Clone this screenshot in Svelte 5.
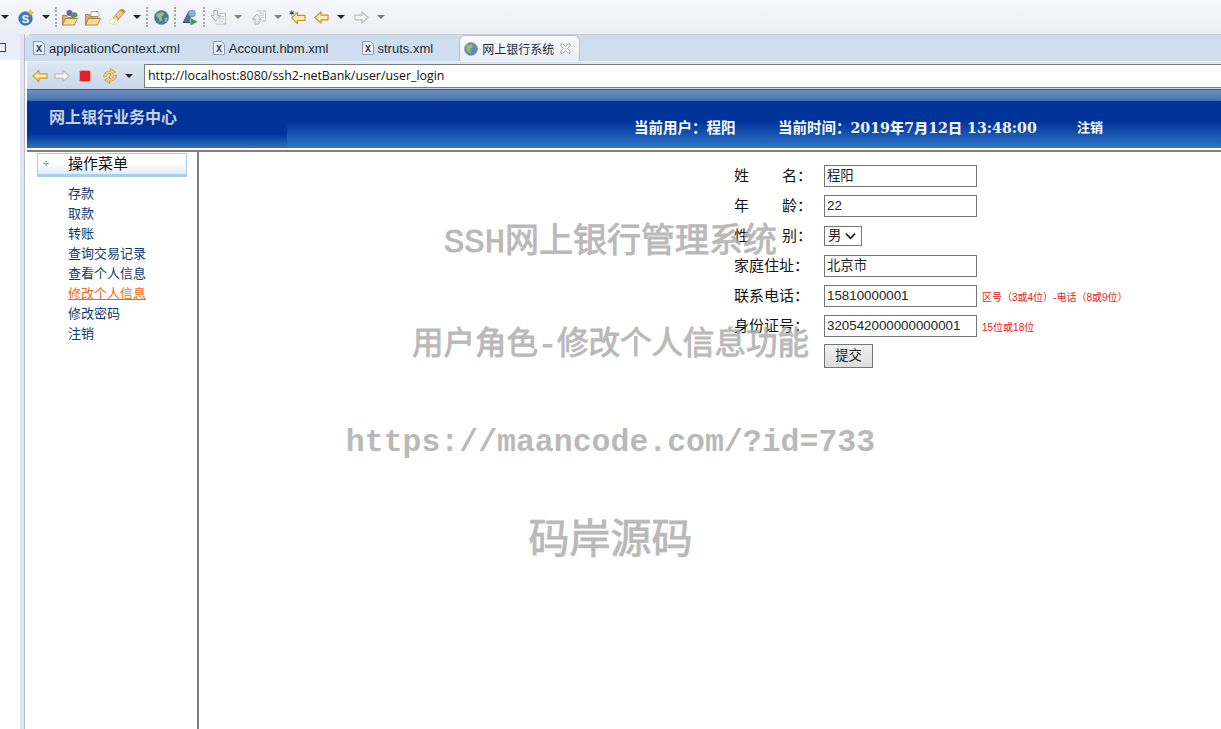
<script lang="ts">
  const menu = ['存款', '取款', '转账', '查询交易记录', '查看个人信息', '修改个人信息', '修改密码', '注销'];
  const activeItem = '修改个人信息';
  const tabs = ['applicationContext.xml', 'Account.hbm.xml', 'struts.xml'];
  const fields = [
    { label: ['姓', '名'], value: '程阳' },
    { label: ['年', '龄'], value: '22' },
    { label: ['性', '别'], select: '男' },
    { label: ['家庭住址'], value: '北京市' },
    { label: ['联系电话'], value: '15810000001', hint: '区号（3或4位）-电话（8或9位）' },
    { label: ['身份证号'], value: '320542000000000001', hint: '15位或18位' }
  ];
</script>

<div class="screen">
  <header class="toolbar">
    <span class="caret"></span>
    <svg class="ico w16 ml9" viewBox="0 0 16 16"><circle cx="7.500" cy="9" r="6.800" fill="#3d7fb6" stroke="#2c5f8e" stroke-width=".6"/><text x="7.500" y="13" font-size="11" font-weight="700" text-anchor="middle" fill="#fff" font-family="Liberation Sans">S</text><path d="M12.500 0l1 2 2 1-2 1-1 2-1-2-2-1 2-1z" fill="#efd24e" stroke="#a98a20" stroke-width=".4"/></svg>
    <span class="caret ml8"></span>
    <span class="sep ml5"></span>
    <svg class="ico w16 ml5" viewBox="0 0 16 16"><circle cx="7.500" cy="3.500" r="3" fill="#6a5f9e"/><ellipse cx="12" cy="5.500" rx="3.500" ry="2.800" fill="#4d9a5a"/><path d="M.5 6h4l1 2h7v2H4l-2 5.500H.5z" fill="#d9b25c" stroke="#8f6b25" stroke-width=".7"/><path d="M3.500 9h12l-3 6.500H.5z" fill="#f6dc9a" stroke="#8f6b25" stroke-width=".7"/></svg>
    <svg class="ico w16 ml7" viewBox="0 0 16 16"><path d="M6 2h7v2l1 1v4H6z" fill="#fbfbfb" stroke="#8a8a8a" stroke-width=".7"/><path d="M.5 5h4l1 2h7v2H4l-2 6.500H.5z" fill="#d9b25c" stroke="#8f6b25" stroke-width=".7"/><path d="M3.500 9h12l-3 6.500H.5z" fill="#f6dc9a" stroke="#8f6b25" stroke-width=".7"/></svg>
    <svg class="ico w18 ml8" viewBox="0 0 18 18"><path d="M4 10l7-8 4 3-7 8z" fill="#e9c98c" stroke="#b08a45" stroke-width=".8"/><path d="M11 2l2-1.500 4 3-2 1.500z" fill="#c28a42"/><ellipse cx="4.500" cy="13.500" rx="3.800" ry="3" fill="#fffbe0" stroke="#d9cfa0" stroke-width=".5"/><path d="M7 8l3 3" stroke="#a9823c"/></svg>
    <span class="caret ml6"></span>
    <span class="sep ml5"></span>
    <svg class="ico w15 ml6" viewBox="0 0 16 16"><circle cx="8" cy="8" r="7.500" fill="#3f7daf" stroke="#54626e" stroke-width=".5"/><path d="M4 3.500l5-1.500 2 2-3 3 1 4-3 1.500-1-4-3-2zM11.500 8l3 .5-1 3.500-2 1z" fill="#a9bd68"/></svg>
    <span class="sep ml5"></span>
    <svg class="ico w16 ml6" viewBox="0 0 16 16"><path d="M1 13L6.500 2l2.500 4-2 7z" fill="#4e6cab" stroke="#2e4a86" stroke-width=".5"/><circle cx="10" cy="4" r="3.500" fill="#8db0cf" stroke="#4f7aa6" stroke-width=".5"/><path d="M1 13h7" stroke="#2e4a86"/><path d="M8.500 8.500l7 3.800-7 3.700z" fill="#3c9a52"/></svg>
    <span class="sep ml5"></span>
    <svg class="ico w15 ml6" viewBox="0 0 16 16"><path d="M6 3.500h9.500V15H5" fill="#f4f4f4" stroke="#bcbcbc"/><path d="M8 7h6M8 9.500h6M8 12h6" stroke="#c6c6c6"/><path d="M3 .5h4V6h3L5 12 0 6h3z" fill="#ebebeb" stroke="#acacac"/></svg>
    <span class="caret gray ml8"></span>
    <svg class="ico w14 ml10" viewBox="0 0 16 16"><path d="M5 .5h10.500V12H9" fill="#f4f4f4" stroke="#bcbcbc"/><path d="M8 3h6M9 5.500h5M10 8h4" stroke="#c6c6c6"/><path d="M5.500 4l5 6H8v5.500H3.500V10H.5z" fill="#ebebeb" stroke="#acacac"/></svg>
    <span class="caret gray ml8"></span>
    <svg class="ico w17 ml7" viewBox="0 0 18 16"><path d="M3 8.500l6-6v3.300h8v5.400H9v3.300z" fill="#fdeeb0" stroke="#c9901f" stroke-width="1.200" stroke-linejoin="round"/><path d="M3 .5v5M.7 1.800l4.600 2.500M5.300 1.800L.7 4.300" stroke="#2e4f80" stroke-width="1.100"/></svg>
    <svg class="ico w15 ml8" viewBox="0 0 16 16"><path d="M1 8l6.500-6v3.500h7.500v5H7.500V14z" fill="#fdeeb0" stroke="#c9901f" stroke-width="1.200" stroke-linejoin="round"/></svg>
    <span class="caret ml8"></span>
    <svg class="ico w15 ml9" viewBox="0 0 16 16"><path d="M15 8L8.500 2v3.500H1v5h7.500V14z" fill="#f7f7f7" stroke="#bdbdbd" stroke-width="1.200" stroke-linejoin="round"/></svg>
    <span class="caret gray ml8"></span>
  </header>

  <div class="workbench">
    <aside class="sideStub">
      <div class="stubTab"><span class="restore"></span></div>
    </aside>

    <main class="editor">
      <nav class="tabBar">
        {#each tabs as tab}
          <div class="tab">
            <svg class="xmlIco" viewBox="0 0 12 14"><path d="M.5.500h8l3 3v10H.5z" fill="#eef2f8" stroke="#8c9cb4"/><text x="6" y="11" font-size="10" font-weight="700" text-anchor="middle" fill="#2c3f73" font-family="Liberation Mono">X</text></svg>
            {tab}
          </div>
        {/each}
        <div class="tab activeTab">
          <svg class="globe" viewBox="0 0 14 14"><circle cx="7" cy="7" r="6.500" fill="#5d8fb5" stroke="#66727c" stroke-width=".4"/><path d="M3 3l5-1 1 3-3 2 1 4-3-1-2-4z" fill="#a5b36b"/></svg>
          <span class="tabTitle">网上银行系统</span>
          <svg class="close" viewBox="0 0 11 11"><path d="M1 1h2l2.500 2.500L8 1h2v2L7.500 5.500 10 8v2H8L5.500 7.500 3 10H1V8l2.500-2.500L1 3z" fill="#fff" stroke="#8d8d8d" stroke-width=".8"/></svg>
        </div>
      </nav>

      <div class="addressBar">
        <svg class="nav" viewBox="0 0 16 14"><path d="M1 7l6-5.500v3.300h8v4.400H7v3.300z" fill="#fdeeb0" stroke="#d09a25" stroke-width="1.200" stroke-linejoin="round"/></svg>
        <svg class="nav" viewBox="0 0 16 14"><path d="M15 7L9 1.500v3.300H1v4.400h8v3.300z" fill="#f7f7f7" stroke="#bdbdbd" stroke-width="1.200" stroke-linejoin="round"/></svg>
        <span class="stop"></span>
        <svg class="nav refresh" viewBox="0 0 16 16"><path d="M1.500 9a6 6 0 0 1 7-6V.5l5 3.500-5 3.500V5.500a3.500 3.500 0 0 0-4 3z" fill="#f6cf6a" stroke="#c9922b" stroke-width=".7"/><path d="M14.500 7a6 6 0 0 1-7 6v2.500l-5-3.500 5-3.500v2a3.500 3.500 0 0 0 4-3z" fill="#f6cf6a" stroke="#c9922b" stroke-width=".7"/></svg>
        <span class="caret navCaret"></span>
        <div class="url">http://localhost:8080/ssh2-netBank/user/user_login</div>
      </div>

      <div class="page">
        <div class="banner">
          <div class="brand">网上银行业务中心</div>
          <div class="status">
            <span class="user">当前用户：程阳</span>
            <span class="time">当前时间：<b>2019年7月12日 13:48:00</b></span>
            <span class="logout">注销</span>
          </div>
        </div>

        <div class="content">
          <div class="menuPane">
            <div class="menuHead"><span class="dots">✣</span>操作菜单</div>
            <ul class="menuList">
              {#each menu as item}
                <li class:current={item === activeItem}>{item}</li>
              {/each}
            </ul>
          </div>

          <div class="formPane">
            <form class="form">
              {#each fields as field}
                <div class="row">
                  <div class="label" class:spread={field.label.length > 1}>
                    {#each field.label as part}<span>{part}</span>{/each}<span class="colon">：</span>
                  </div>
                  {#if field.select}
                    <span class="select">{field.select}<svg viewBox="0 0 12 8"><path d="M1 1.500l5 5 5-5" fill="none" stroke="#222" stroke-width="2"/></svg></span>
                  {:else}
                    <div class="input">{field.value}</div>
                  {/if}
                  {#if field.hint}<span class="hint">{field.hint}</span>{/if}
                </div>
              {/each}
              <div class="row submitRow"><span class="submit">提交</span></div>
            </form>
          </div>
        </div>
      </div>
    </main>
  </div>

  <div class="watermark">
    <div class="w1">SSH网上银行管理系统</div>
    <div class="w2">用户角色-修改个人信息功能</div>
    <div class="w3">https://maancode.com/?id=733</div>
    <div class="w4">码岸源码</div>
  </div>
</div>

<style>
  :global(body) {
    margin: 0;
    background: #fff;
  }

  .screen {
    position: relative;
    width: 1221px;
    height: 729px;
    overflow: hidden;
    font-family: "Liberation Sans", "Noto Sans CJK SC", sans-serif;
    background: #dfe5f5;
  }

  .toolbar {
    height: 34px;
    display: flex;
    align-items: center;
    padding-left: 1px;
    box-sizing: border-box;
    background: linear-gradient(180deg, #f6f7fc 0%, #eceef7 100%);
  }

  .ico {
    height: 17px;
    flex: none;
  }

  .w14 { width: 14px; }
  .w15 { width: 15px; }
  .w16 { width: 16px; }
  .w17 { width: 17px; }
  .w18 { width: 18px; height: 18px; }

  .ml5 { margin-left: 5px; }
  .ml6 { margin-left: 6px; }
  .ml7 { margin-left: 7px; }
  .ml8 { margin-left: 8px; }
  .ml9 { margin-left: 9px; }
  .ml10 { margin-left: 10px; }

  .caret {
    width: 0;
    height: 0;
    border-left: 4px solid transparent;
    border-right: 4px solid transparent;
    border-top: 4px solid #222;
    flex: none;
  }

  .caret.gray {
    border-top-color: #808080;
  }

  .sep {
    width: 0;
    height: 20px;
    border-left: 2px dotted #a8a8a8;
    flex: none;
  }

  .workbench {
    display: flex;
    height: 695px;
  }

  .sideStub {
    width: 20px;
    background: #fff;
    border-radius: 0 6px 0 0;
    flex: none;
  }

  .stubTab {
    height: 26px;
    background: #e9eef8;
    border-radius: 0 6px 0 0;
    position: relative;
  }

  .restore {
    position: absolute;
    left: -2px;
    top: 9px;
    width: 6px;
    height: 7px;
    border: 1px solid #444;
  }

  .editor {
    margin-left: 4px;
    flex: 1;
    min-width: 0;
    display: flex;
    flex-direction: column;
    background: #fff;
    border-left: 1px solid #b9bcc4;
  }

  .tabBar {
    height: 27px;
    display: flex;
    align-items: stretch;
    background: #cfdeee;
    border-top: 1px solid #c8ccd6;
    box-sizing: border-box;
    border-radius: 6px 0 0 0;
    font-size: 13px;
    color: #1b2a3a;
  }

  .tab {
    display: flex;
    align-items: center;
    gap: 4px;
    padding: 0 26px 0 8px;
    white-space: nowrap;
  }

  .tab + .tab {
    padding-left: 7px;
  }

  .xmlIco {
    width: 12px;
    height: 14px;
  }

  .tab.activeTab {
    margin-left: 0;
    padding: 0 8px 0 4px;
    background: linear-gradient(180deg, #fafbfd, #e8eef6);
    border: 1px solid #b8c2ce;
    border-bottom: 0;
    border-radius: 6px 6px 0 0;
    font-size: 12px;
  }

  .globe {
    width: 14px;
    height: 14px;
  }

  .close {
    width: 11px;
    height: 11px;
    margin-left: 2px;
  }

  .addressBar {
    height: 28px;
    margin-left: 2px;
    display: flex;
    align-items: center;
    box-sizing: border-box;
    padding-left: 5px;
    background: linear-gradient(180deg, #dde7f3, #c8d9ec);
    border-top: 1px solid #eef2f8;
  }

  .nav {
    width: 16px;
    height: 14px;
    margin-right: 6px;
    flex: none;
  }

  .stop {
    width: 10px;
    height: 10px;
    background: #e3202c;
    border: 1px solid #e8a0a0;
    border-radius: 2px;
    margin: 0 11px 0 3px;
    flex: none;
  }

  .refresh {
    height: 16px;
    margin-right: 7px;
  }

  .navCaret {
    margin-right: 11px;
  }

  .url {
    flex: 1;
    height: 24px;
    margin-top: 1px;
    box-sizing: border-box;
    border: 1px solid #7b7b7b;
    border-right: 0;
    background: #fff;
    padding-left: 3px;
    font-family: "Open Sans", "Noto Sans", sans-serif;
    font-size: 12.400px;
    line-height: 21px;
    color: #111;
    white-space: nowrap;
  }

  .page {
    flex: 1;
    min-height: 0;
    margin-left: 2px;
    display: flex;
    flex-direction: column;
  }

  .banner {
    height: 59px;
    flex: none;
    display: flex;
    border-top: 1px solid #2a5aa8;
    box-sizing: border-box;
    background: linear-gradient(180deg, #6e90c0 0%, #4a75b0 18%, #00339a 19%, #00339a 54%, #2f76c8 100%);
    color: #fff;
  }

  .brand {
    width: 238px;
    height: 44px;
    margin-top: 11px;
    padding: 3px 0 0 22px;
    box-sizing: content-box;
    font: 700 16px "Liberation Serif", "Noto Sans CJK SC", sans-serif;
    color: #c8cfe0;
    flex: none;
    background: linear-gradient(180deg, #00339a 0, #00339a 33px, #2f72c4 100%);
  }

  .status {
    height: 18px;
    margin-top: 27px;
    padding-left: 347px;
    display: flex;
    align-items: center;
    font: 700 14.500px "Noto Sans CJK SC", sans-serif;
    white-space: nowrap;
  }

  .user {
    width: 144px;
  }

  .time {
    width: 299px;
  }

  .time b {
    font-family: "DejaVu Serif", "Noto Sans CJK SC", serif;
    font-size: 14.200px;
    color: #eef3ff;
  }

  .logout {
    font-size: 13px;
  }

  .content {
    flex: 1;
    min-height: 0;
    display: flex;
    margin-top: 2px;
    border-top: 2px solid #7f7f7f;
  }

  .menuPane {
    width: 170px;
    flex: none;
    border-right: 2px solid #7f7f7f;
    padding-top: 1px;
  }

  .menuHead {
    margin-left: 10px;
    width: 150px;
    height: 24px;
    box-sizing: border-box;
    border: 1px solid #a9cdec;
    border-bottom: 3px solid #a9cdec;
    background: linear-gradient(180deg, #fff 40%, #e4eef8);
    font-size: 15px;
    line-height: 20px;
    color: #111;
    display: flex;
  }

  .dots {
    width: 30px;
    font-size: 7px;
    color: #5b8fd0;
    padding-left: 5px;
    box-sizing: border-box;
  }

  .menuList {
    list-style: none;
    margin: 7px 0 0;
    padding: 0 0 0 41px;
    font-size: 13px;
    color: #0e3a6e;
  }

  .menuList li {
    height: 20px;
    line-height: 19px;
  }

  .current {
    color: #f26a10;
    text-decoration: underline;
    width: 78px;
  }

  .formPane {
    flex: 1;
    padding: 9px 0 0 535px;
    min-width: 0;
  }

  .form {
    display: flex;
    flex-direction: column;
  }

  .row {
    height: 30px;
    display: flex;
    align-items: center;
    white-space: nowrap;
  }

  .label {
    width: 90px;
    margin-bottom: 3px;
    box-sizing: border-box;
    display: flex;
    font-size: 15px;
    color: #111;
    flex: none;
  }

  .label.spread span:first-child {
    width: 48px;
  }

  .colon {
    width: 15px;
  }

  .input {
    width: 153px;
    height: 22px;
    box-sizing: border-box;
    border: 1px solid #767676;
    padding-left: 2px;
    font-size: 13.330px;
    line-height: 20px;
    color: #222;
    background: #fff;
  }

  .select {
    width: 38px;
    height: 20px;
    box-sizing: border-box;
    border: 1px solid #767676;
    padding-left: 3px;
    font-size: 13.330px;
    line-height: 18px;
    display: flex;
    align-items: center;
    gap: 4px;
    color: #222;
    background: #fff;
  }

  .select svg {
    width: 11px;
    height: 8px;
  }

  .hint {
    color: #f01818;
    font-size: 10px;
    margin-left: 5px;
  }

  .submitRow {
    height: 24px;
    margin-top: 3px;
    padding-left: 90px;
  }

  .submit {
    width: 49px;
    height: 24px;
    box-sizing: border-box;
    border: 1px solid #767676;
    background: linear-gradient(180deg, #f2f2f2, #dcdcdc);
    font-size: 13.330px;
    line-height: 22px;
    text-align: center;
    color: #222;
  }

  .watermark {
    position: absolute;
    inset: 0;
    pointer-events: none;
    text-align: center;
    color: #a8a8a8;
    opacity: .8;
    font-weight: 400;
    -webkit-text-stroke: .9px #a8a8a8;
    font-family: "Liberation Mono", "Noto Sans CJK SC", monospace;
    white-space: nowrap;
  }

  .watermark div {
    position: absolute;
    left: 0;
    right: 0;
  }

  .w1 {
    top: 213px;
    font-size: 34px;
  }

  .w2 {
    top: 317px;
    font-size: 31.500px;
  }

  .w3 {
    top: 425px;
    font-size: 31.500px;
    font-weight: 700;
    -webkit-text-stroke: 0;
  }

  .w4 {
    top: 505px;
    font-size: 41px;
  }
</style>
